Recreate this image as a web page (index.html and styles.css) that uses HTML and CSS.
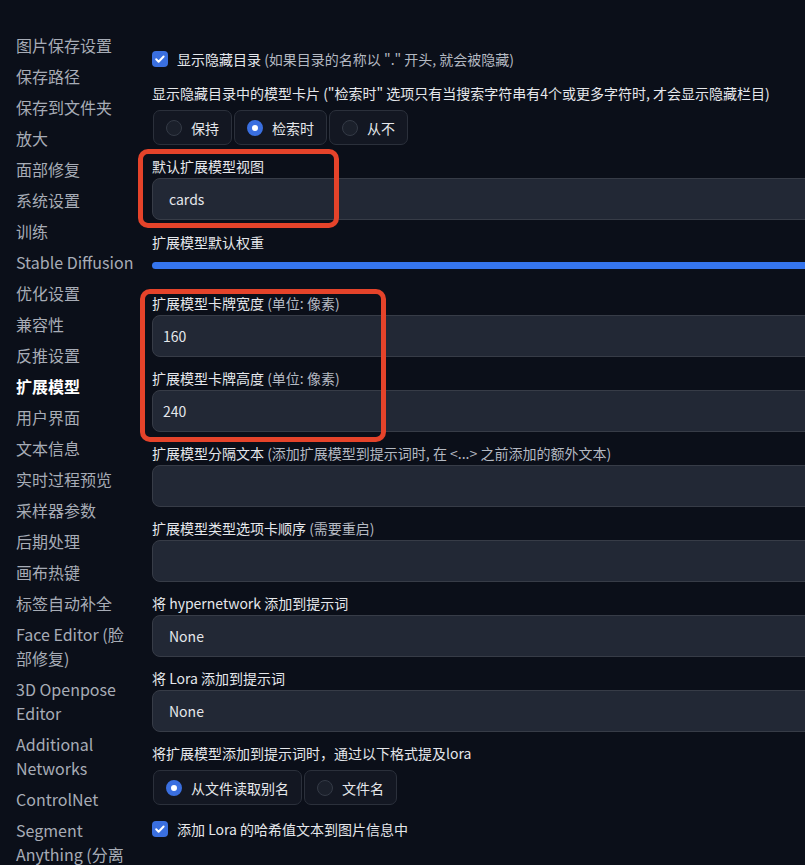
FILE: index.html
```html
<!DOCTYPE html>
<html lang="zh-CN">
<head>
    <meta charset="UTF-8">
    <title>设置 - 扩展模型</title>
    <link rel="stylesheet" href="styles.css">
</head>
<body>
    <div class="layout">
        <nav class="sidebar">
            <div class="nav-item">图片保存设置</div>
            <div class="nav-item">保存路径</div>
            <div class="nav-item">保存到文件夹</div>
            <div class="nav-item">放大</div>
            <div class="nav-item">面部修复</div>
            <div class="nav-item">系统设置</div>
            <div class="nav-item">训练</div>
            <div class="nav-item">Stable Diffusion</div>
            <div class="nav-item">优化设置</div>
            <div class="nav-item">兼容性</div>
            <div class="nav-item">反推设置</div>
            <div class="nav-item active">扩展模型</div>
            <div class="nav-item">用户界面</div>
            <div class="nav-item">文本信息</div>
            <div class="nav-item">实时过程预览</div>
            <div class="nav-item">采样器参数</div>
            <div class="nav-item">后期处理</div>
            <div class="nav-item">画布热键</div>
            <div class="nav-item">标签自动补全</div>
            <div class="nav-item">Face Editor (脸部修复)</div>
            <div class="nav-item">3D Openpose Editor</div>
            <div class="nav-item">Additional Networks</div>
            <div class="nav-item">ControlNet</div>
            <div class="nav-item">Segment Anything (分离</div>
        </nav>

        <main class="settings">
            <div class="check-row">
                <span class="checkbox"><svg viewBox="0 0 16 16"><path d="M4.2 8.3l2.4 2.4 5-5.2" /></svg></span>
                <span>显示隐藏目录 <span class="hint">(如果目录的名称以 "." 开头, 就会被隐藏)</span></span>
            </div>

            <div class="label">显示隐藏目录中的模型卡片 ("检索时" 选项只有当搜索字符串有4个或更多字符时, 才会显示隐藏栏目)</div>
            <div class="radio-group">
                <div class="radio"><span class="dot"></span>保持</div>
                <div class="radio"><span class="dot checked"></span>检索时</div>
                <div class="radio"><span class="dot"></span>从不</div>
            </div>

            <div class="field first">
                <div class="label">默认扩展模型视图</div>
                <div class="input">cards</div>
            </div>

            <div class="label">扩展模型默认权重</div>
            <div class="slider"></div>

            <div class="field">
                <div class="label">扩展模型卡牌宽度 <span class="hint">(单位: 像素)</span></div>
                <div class="input number">160</div>
            </div>
            <div class="field">
                <div class="label">扩展模型卡牌高度 <span class="hint">(单位: 像素)</span></div>
                <div class="input number">240</div>
            </div>
            <div class="field">
                <div class="label">扩展模型分隔文本 <span class="hint">(添加扩展模型到提示词时, 在 &lt;...&gt; 之前添加的额外文本)</span></div>
                <div class="input"></div>
            </div>
            <div class="field">
                <div class="label">扩展模型类型选项卡顺序 <span class="hint">(需要重启)</span></div>
                <div class="input"></div>
            </div>
            <div class="field">
                <div class="label">将 hypernetwork 添加到提示词</div>
                <div class="input">None</div>
            </div>
            <div class="field">
                <div class="label">将 Lora 添加到提示词</div>
                <div class="input">None</div>
            </div>

            <div class="label">将扩展模型添加到提示词时，通过以下格式提及lora</div>
            <div class="radio-group">
                <div class="radio"><span class="dot checked"></span>从文件读取别名</div>
                <div class="radio"><span class="dot"></span>文件名</div>
            </div>

            <div class="check-row last">
                <span class="checkbox"><svg viewBox="0 0 16 16"><path d="M4.2 8.3l2.4 2.4 5-5.2" /></svg></span>
                <span>添加 Lora 的哈希值文本到图片信息中</span>
            </div>

            <!-- annotation boxes drawn over the screenshot -->
            <div class="mark mark-view"></div>
            <div class="mark mark-size"></div>
        </main>
    </div>
</body>
</html>
```

FILE: styles.css
```css
html, body {
    margin: 0;
    padding: 0;
    overflow: hidden;
    background-color: #0b0f19;
}

body {
    font-family: "Noto Sans CJK SC", "Noto Sans", sans-serif;
    color: #e5e7eb;
    width: 805px;
    height: 865px;
}

.layout {
    display: flex;
}

.sidebar {
    width: 121px;
    flex: none;
    padding: 33px 0 0 16px;
    font-size: 16px;
    line-height: 24px;
    color: #a7acb6;
}

.nav-item {
    margin-bottom: 7px;
}

.nav-item.active {
    color: #ffffff;
    font-weight: 700;
}

.settings {
    position: relative;
    flex: none;
    width: 780px;
    margin-left: 15px;
    padding-top: 49px;
    font-size: 14px;
    line-height: 20px;
}

.hint {
    color: #b4b9c2;
}

.label {
    margin-bottom: 7px;
}

.check-row {
    display: flex;
    align-items: center;
    gap: 9px;
    margin-bottom: 14px;
}

.check-row.last {
    margin-top: 14px;
}

.checkbox {
    width: 16px;
    height: 16px;
    border-radius: 4px;
    background-color: #3a6fe0;
    display: flex;
}

.checkbox svg {
    width: 16px;
    height: 16px;
    fill: none;
    stroke: #ffffff;
    stroke-width: 2;
    stroke-linecap: round;
    stroke-linejoin: round;
}

.radio-group {
    display: flex;
    gap: 2px;
    margin-left: 1px;
}

.radio {
    display: flex;
    align-items: center;
    gap: 9px;
    height: 33px;
    padding: 0 12px;
    border: 1px solid #2b303b;
    border-radius: 7px;
    background-color: #131722;
}

.dot {
    width: 14px;
    height: 14px;
    border-radius: 50%;
    border: 1px solid #343a46;
    background-color: #1b202b;
}

.dot.checked {
    width: 6px;
    height: 6px;
    border: 5px solid #3a6fe0;
    background-color: #ffffff;
}

.field {
    margin-bottom: 11px;
}

.field .label {
    margin-bottom: 2px;
}

.field.first {
    margin-top: 11px;
    margin-bottom: 12px;
}

.input {
    height: 40px;
    line-height: 40px;
    padding: 0 16px;
    border: 1px solid #373c47;
    border-radius: 8px;
    background-color: #222835;
}

.input.number {
    padding: 0 10px;
}

.slider {
    height: 7px;
    margin: 10px 0 24px;
    border-radius: 4px 0 0 4px;
    background-color: #3575ee;
}

.mark {
    position: absolute;
    border: 5px solid #e5432a;
    border-radius: 10px;
}

.mark-view {
    left: -14px;
    top: 149px;
    width: 191px;
    height: 69px;
}

.mark-size {
    left: -12px;
    top: 289px;
    width: 236px;
    height: 143px;
}
```
